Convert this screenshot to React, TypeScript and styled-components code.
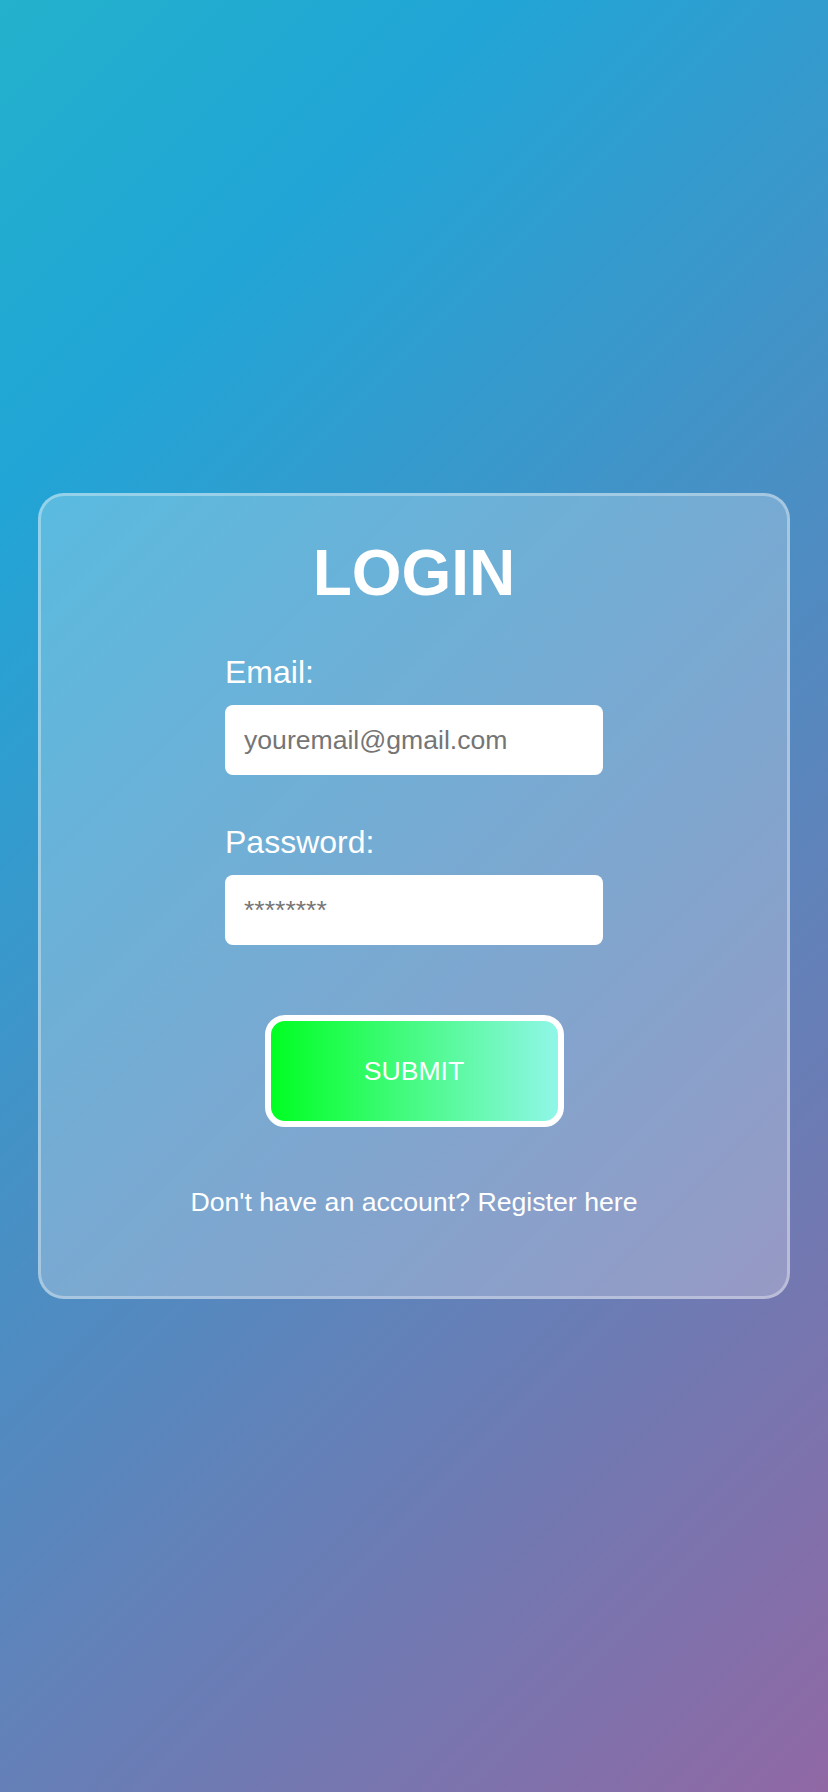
import React from "react";
import styled, { createGlobalStyle } from "styled-components";

const GlobalStyle = createGlobalStyle`
  html, body {
    margin: 0;
    padding: 0;
  }

  body {
    font-family: "Liberation Sans", Arial, sans-serif;
  }

  * {
    box-sizing: border-box;
  }
`;

const App = () => {
  return (
    <>
      <GlobalStyle />
      <Page>
        <Card>
          <Title>LOGIN</Title>
          <Form onSubmit={(e) => e.preventDefault()}>
            <Field>
              <Label htmlFor="email">Email:</Label>
              <Input id="email" type="email" placeholder="youremail@gmail.com" />
            </Field>
            <Field>
              <Label htmlFor="password">Password:</Label>
              <Input id="password" type="password" placeholder="********" />
            </Field>
            <SubmitButton type="submit">SUBMIT</SubmitButton>
          </Form>
          <RegisterText>Don't have an account? Register here</RegisterText>
        </Card>
      </Page>
    </>
  );
};

const Page = styled.div`
  min-height: 100vh;
  display: flex;
  align-items: center;
  justify-content: center;
  padding: 0 38px;
  background: linear-gradient(135deg, #23b1cc 0%, #21a5d6 19%, #9068a4 100%);
`;

const Card = styled.div`
  width: 100%;
  display: flex;
  flex-direction: column;
  align-items: center;
  padding: 45px 0 79px;
  border: 3px solid rgba(255, 255, 255, 0.35);
  border-radius: 26px;
  background: rgba(255, 255, 255, 0.25);
`;

const Title = styled.h1`
  margin: 0 0 51px;
  font-size: 64px;
  line-height: 64px;
  font-weight: 700;
  color: #fff;
`;

const Form = styled.form`
  width: 378px;
  display: flex;
  flex-direction: column;
`;

const Field = styled.div`
  display: flex;
  flex-direction: column;
  gap: 17px;
  margin-bottom: 51px;

  &:last-of-type {
    margin-bottom: 70px;
  }
`;

const Label = styled.label`
  font-size: 32px;
  line-height: 32px;
  color: #fff;
`;

const Input = styled.input`
  width: 100%;
  height: 70px;
  padding: 0 19px;
  border: none;
  border-radius: 8px;
  background: #fff;
  font-family: "Liberation Sans", Arial, sans-serif;
  font-size: 26.6px;
  color: #333;
  outline: none;

  &::placeholder {
    color: #757575;
  }
`;

const SubmitButton = styled.button`
  align-self: center;
  width: 299px;
  height: 112px;
  border: 6px solid #fff;
  border-radius: 20px;
  background: linear-gradient(to right, #00ff22, #90f6e8);
  font-family: "Liberation Sans", Arial, sans-serif;
  font-size: 26.6px;
  color: #fff;
  cursor: pointer;
`;

const RegisterText = styled.p`
  margin: 60px 0 0;
  font-size: 26.7px;
  line-height: 30px;
  color: #fff;
  text-align: center;
`;

export default App;
